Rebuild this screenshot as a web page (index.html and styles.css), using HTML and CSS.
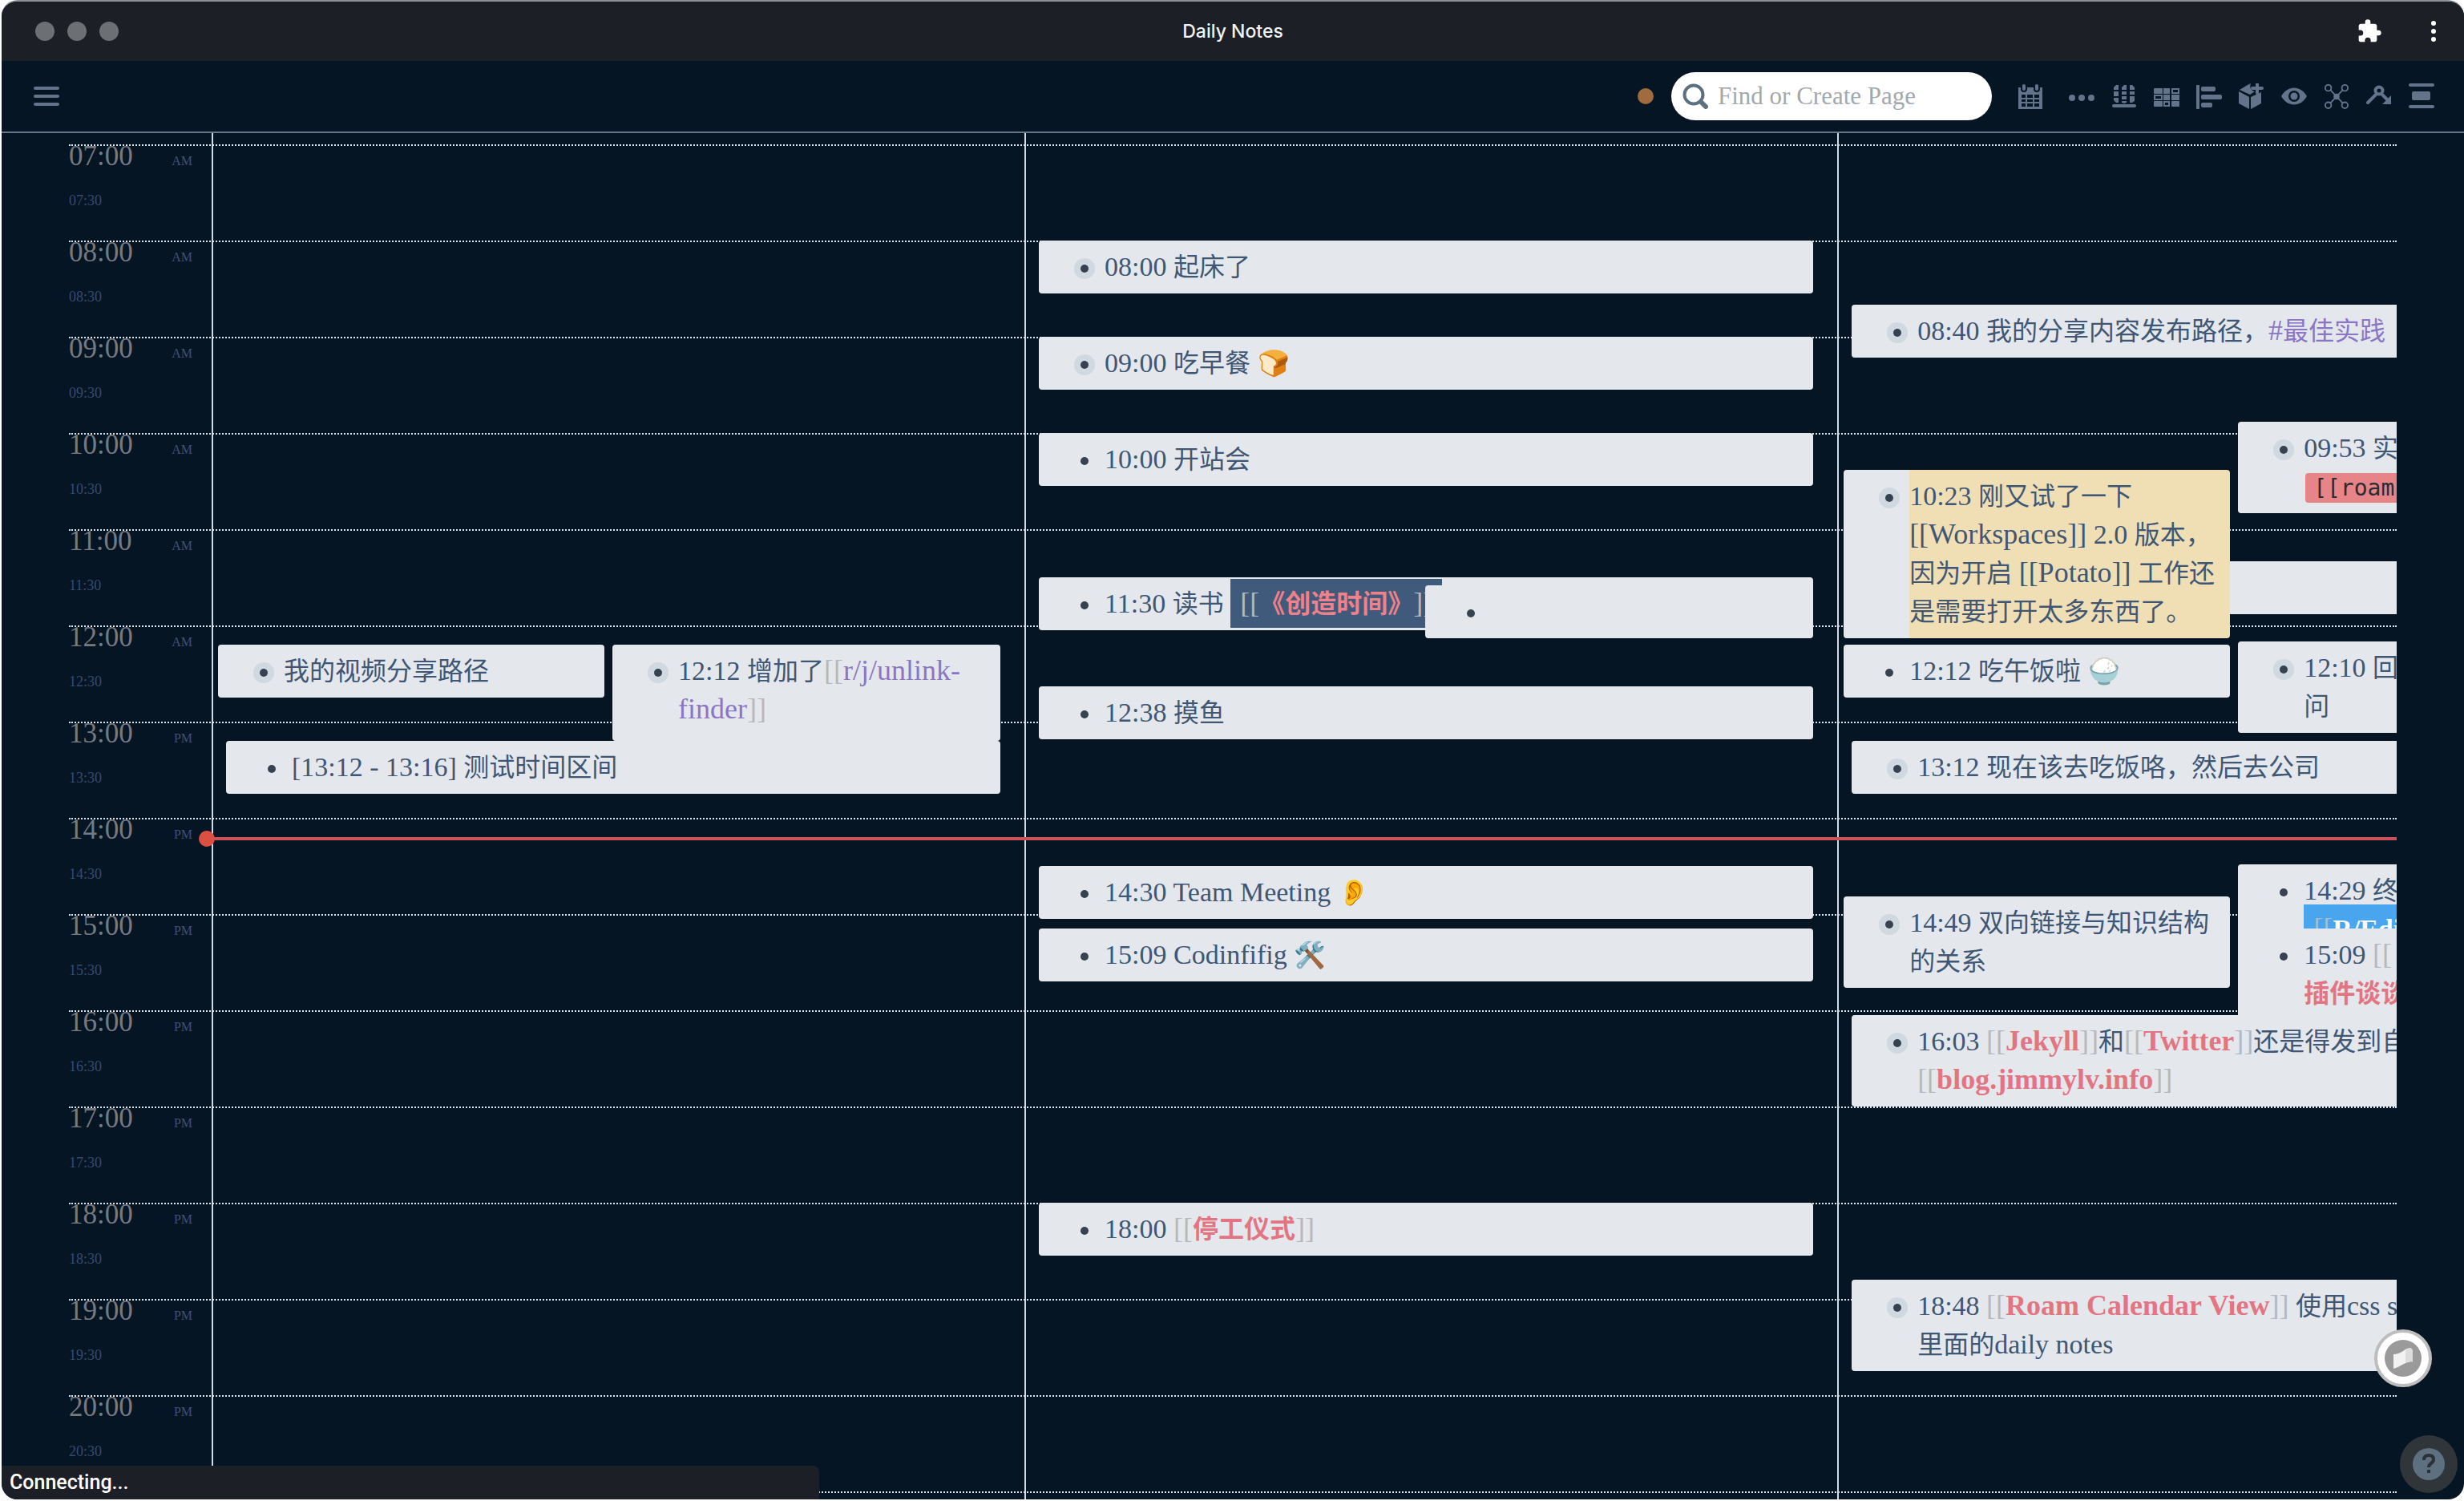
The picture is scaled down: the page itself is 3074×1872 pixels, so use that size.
FILE: index.html
```html
<!DOCTYPE html>
<html lang="en">
<head>
<meta charset="utf-8">
<title>Daily Notes</title>
<link rel="stylesheet" href="styles.css">
</head>
<body>
<div class="window">
  <header class="titlebar">
    <div class="lights"><span class="light"></span><span class="light"></span><span class="light"></span></div>
    <h1 class="title">Daily Notes</h1>
    <div class="title-actions">
      <button class="icon-btn" aria-label="Extensions"><svg viewBox="0 0 24 24" fill="#fff"><path d="M20.5 11H19V7c0-1.100-.9-2-2-2h-4V3.500a2.500 2.500 0 0 0-5 0V5H4c-1.100 0-2 .9-2 2v3.800h1.500a2.700 2.700 0 0 1 0 5.400H2V20c0 1.100.9 2 2 2h3.800v-1.500a2.700 2.700 0 0 1 5.400 0V22H17c1.100 0 2-.9 2-2v-4h1.500a2.500 2.500 0 0 0 0-5z"/></svg></button>
      <button class="icon-btn" aria-label="Menu"><svg viewBox="0 0 32 32" fill="#fff"><circle cx="16" cy="6" r="3"/><circle cx="16" cy="16" r="3"/><circle cx="16" cy="26" r="3"/></svg></button>
    </div>
  </header>

  <nav class="topbar">
    <button class="icon-btn" aria-label="Open sidebar"><svg viewBox="0 0 32 32"><path d="M2 6h28M2 16h28M2 26h28" stroke="currentColor" stroke-width="4" stroke-linecap="round"/></svg></button>
    <div class="tools">
      <span class="sync-dot"></span>
      <label class="search">
        <svg class="search-icon" viewBox="0 0 32 32" fill="none" stroke="#5c7080"><circle cx="14" cy="14" r="11.500" stroke-width="4"/><path d="M23 23l6 6" stroke-width="6" stroke-linecap="round"/></svg>
        <input class="search-input" type="text" placeholder="Find or Create Page" aria-label="Find or Create Page">
      </label>
      <button class="icon-btn" aria-label="Calendar"><svg viewBox="0 0 32 32"><path fill="currentColor" fill-rule="evenodd" d="M1 5h3v2a4 4 0 0 0 8 0V5h8v2a4 4 0 0 0 8 0V5h3v27H1zM5 14v4h5v-4zM12 14v4h7v-4zM21 14v4h6v-4zM5 20v3h5v-3zM12 20v3h7v-3zM21 20v3h6v-3zM5 25v4h5v-4zM12 25v4h7v-4zM21 25v4h6v-4z"/><rect x="6" y="1" width="4" height="8" rx="2" fill="currentColor"/><rect x="22" y="1" width="4" height="8" rx="2" fill="currentColor"/></svg></button>
      <div class="tool-row">
        <button class="icon-btn" aria-label="More"><svg viewBox="0 0 32 32" fill="currentColor"><circle cx="4" cy="18" r="4"/><circle cx="16" cy="18" r="4"/><circle cx="28" cy="18" r="4"/></svg></button>
        <button class="icon-btn" aria-label="Columns"><svg viewBox="0 0 32 32" fill="currentColor"><path d="M3 8V5l3-3h3v6zM3 10h6v6H3zM3 18h6v6H6l-3-3zM13 8V5l3-3h3v6zM13 10h6v4h-6zM13 16h6v4h-6zM13 22h6v2l-3 1-3-1zM23 2h3l3 3v3h-6zM23 10h6v4h-6zM23 16h6v6l-3 2h-3z"/><rect x="1" y="26" width="30" height="4" rx="2"/></svg></button>
        <button class="icon-btn" aria-label="Table"><svg viewBox="0 0 32 32" fill="currentColor"><rect y="6" width="11" height="7" rx="1"/><rect x="12" y="6" width="8" height="7"/><rect x="12" y="14" width="8" height="7"/><rect x="22" y="14" width="10" height="7"/><rect y="22" width="11" height="7" rx="1"/><rect x="22" y="22" width="10" height="7" rx="1"/><g fill="none" stroke="currentColor" stroke-width="2"><rect x="23" y="7" width="8" height="5"/><rect x="1" y="15" width="9" height="5"/><rect x="13" y="23" width="6" height="5"/></g></svg></button>
        <button class="icon-btn" aria-label="Align left"><svg viewBox="0 0 32 32" fill="currentColor"><rect y="2" width="4" height="30" rx="1"/><rect x="6" y="4" width="18" height="6" rx="2"/><rect x="6" y="14" width="26" height="6" rx="2"/><rect x="6" y="24" width="14" height="6" rx="2"/></svg></button>
        <button class="icon-btn" aria-label="New block"><svg viewBox="0 0 32 32" fill="currentColor"><path d="M0 10l13 7v15L0 25zM15 32V17l13-6v14zM1 8l10-6 4-2c-2 5 0 9 5 10l-6 4z"/><path d="M23 0v12M17 6h12" stroke="currentColor" stroke-width="4" stroke-linecap="round"/></svg></button>
        <button class="icon-btn" aria-label="View"><svg viewBox="0 0 32 32"><path fill="currentColor" fill-rule="evenodd" d="M0 16C8 2 24 2 32 16 24 30 8 30 0 16zM16 9a7 7 0 1 0 0 14 7 7 0 0 0 0-14z"/><circle cx="16" cy="16" r="4.500" fill="currentColor"/></svg></button>
        <button class="icon-btn" aria-label="Graph"><svg viewBox="0 0 32 34" fill="none" stroke="currentColor" stroke-width="2"><circle cx="5" cy="6" r="4"/><circle cx="27" cy="6" r="4"/><circle cx="5" cy="29" r="4"/><circle cx="27" cy="29" r="4"/><path d="M8 9l16 17M24 9L8 26"/><circle cx="16" cy="17.500" r="3" fill="currentColor"/></svg></button>
        <button class="icon-btn" aria-label="Path"><svg viewBox="0 0 32 32" fill="none" stroke="currentColor" stroke-width="4" stroke-linecap="round"><circle cx="16" cy="9" r="4.500"/><path d="M12 14L2 24M20 14l8 8"/><path d="M31 15v11H20z" fill="currentColor" stroke="none"/></svg></button>
        <button class="icon-btn" aria-label="Sidebar"><svg viewBox="0 0 32 32" fill="currentColor"><rect y="0" width="32" height="4" rx="2"/><rect x="4" y="10" width="23" height="11" rx="2"/><rect y="27" width="32" height="4" rx="2"/></svg></button>
      </div>
    </div>
  </nav>

  <main class="calendar">
    <ol class="hours">
      <li class="hour"><div class="hour-head"><time>07:00</time><small>AM</small></div><div class="half">07:30</div></li>
      <li class="hour"><div class="hour-head"><time>08:00</time><small>AM</small></div><div class="half">08:30</div></li>
      <li class="hour"><div class="hour-head"><time>09:00</time><small>AM</small></div><div class="half">09:30</div></li>
      <li class="hour"><div class="hour-head"><time>10:00</time><small>AM</small></div><div class="half">10:30</div></li>
      <li class="hour"><div class="hour-head"><time>11:00</time><small>AM</small></div><div class="half">11:30</div></li>
      <li class="hour"><div class="hour-head"><time>12:00</time><small>AM</small></div><div class="half">12:30</div></li>
      <li class="hour"><div class="hour-head"><time>13:00</time><small>PM</small></div><div class="half">13:30</div></li>
      <li class="hour"><div class="hour-head"><time>14:00</time><small>PM</small></div><div class="half">14:30</div></li>
      <li class="hour"><div class="hour-head"><time>15:00</time><small>PM</small></div><div class="half">15:30</div></li>
      <li class="hour"><div class="hour-head"><time>16:00</time><small>PM</small></div><div class="half">16:30</div></li>
      <li class="hour"><div class="hour-head"><time>17:00</time><small>PM</small></div><div class="half">17:30</div></li>
      <li class="hour"><div class="hour-head"><time>18:00</time><small>PM</small></div><div class="half">18:30</div></li>
      <li class="hour"><div class="hour-head"><time>19:00</time><small>PM</small></div><div class="half">19:30</div></li>
      <li class="hour"><div class="hour-head"><time>20:00</time><small>PM</small></div><div class="half">20:30</div></li>
      <li class="hour"></li>
    </ol>

    <!-- --at is the number of minutes after 07:00 -->
    <div class="days">
      <section class="day">
        <article class="event left parent" style="--at:312"><span class="zh">我的视频分享路径</span></article>
        <article class="event right parent tall" style="--at:312">12:12 <span class="zh">增加了</span><i class="br">[[</i><a class="tag" href="#">r/j/unlink-<br>finder</a><i class="br">]]</i></article>
        <article class="event" style="--at:372">[13:12 - 13:16] <span class="zh">测试时间区间</span></article>
      </section>

      <section class="day">
        <article class="event parent" style="--at:60">08:00 <span class="zh">起床了</span></article>
        <article class="event parent" style="--at:120">09:00 <span class="zh">吃早餐</span> <span class="emoji">🍞</span></article>
        <article class="event" style="--at:180">10:00 <span class="zh">开站会</span></article>
        <article class="event" style="--at:270">11:30 <span class="zh">读书</span> <span class="mark navy"><i class="br">[[</i><a class="ref zh" href="#">《创造时间》</a><i class="br">]]</i></span></article>
        <article class="event right" style="--at:275"></article>
        <article class="event" style="--at:338">12:38 <span class="zh">摸鱼</span></article>
        <article class="event" style="--at:450">14:30 Team Meeting <span class="emoji">👂</span></article>
        <article class="event" style="--at:489">15:09 Codinfifig <span class="emoji">🛠️</span></article>
        <article class="event" style="--at:660">18:00 <i class="br">[[</i><a class="ref zh" href="#">停工仪式</a><i class="br">]]</i></article>
      </section>

      <section class="day">
        <article class="event parent" style="--at:100">08:40 <span class="zh">我的分享内容发布路径，</span><a class="tag" href="#">#<span class="zh">最佳实践</span></a></article>
        <article class="event right parent" style="--at:173">09:53 <span class="zh">实</span><br><code class="code">[[roam</code></article>
        <article class="event" style="--at:260"></article>
        <article class="event left parent sand" style="--at:203">10:23 <span class="zh">刚又试了一下</span><br><span class="page">[[Workspaces]]</span> 2.0 <span class="zh">版本，</span><br><span class="zh">因为开启</span> <span class="page">[[Potato]]</span> <span class="zh">工作还</span><br><span class="zh">是需要打开太多东西了。</span></article>
        <article class="event left" style="--at:312">12:12 <span class="zh">吃午饭啦</span> <span class="emoji">🍚</span></article>
        <article class="event right parent" style="--at:310">12:10 <span class="zh">回</span><br><span class="zh">问</span></article>
        <article class="event parent" style="--at:372">13:12 <span class="zh">现在该去吃饭咯，然后去公司</span></article>
        <article class="event right" style="--at:449">14:29 <span class="zh">终</span><br><span class="mark blue"><i class="br">[[</i><b>R/Edi</b></span></article>
        <article class="event left parent" style="--at:469">14:49 <span class="zh">双向链接与知识结构</span><br><span class="zh">的关系</span></article>
        <article class="event right" style="--at:489">15:09 <i class="br">[[</i><br><a class="ref zh" href="#">插件谈谈</a></article>
        <article class="event parent" style="--at:543">16:03 <i class="br">[[</i><a class="ref" href="#">Jekyll</a><i class="br">]]</i><span class="zh">和</span><i class="br">[[</i><a class="ref" href="#">Twitter</a><i class="br">]]</i><span class="zh">还是得发到自</span><br><i class="br">[[</i><a class="ref" href="#">blog.jimmylv.info</a><i class="br">]]</i></article>
        <article class="event parent" style="--at:708">18:48 <i class="br">[[</i><a class="ref" href="#">Roam Calendar View</a><i class="br">]]</i> <span class="zh">使用</span>css s<br><span class="zh">里面的</span>daily notes</article>
      </section>
      <div class="now" style="--at:433"></div>
    </div>
  </main>

  <button class="fab note" aria-label="Notes"><svg viewBox="0 0 72 72"><circle cx="36" cy="36" r="34" fill="#fff" stroke="#bdbdbd" stroke-width="4"/><circle cx="36" cy="36" r="23" fill="#9a9a9a"/><path d="M24 31q6 0 12-4 5-4 10-4v17q-6 1-11 4-6 4-11 5z" fill="#f2f2f2"/><path d="M39 27q4-4 7-4l2 3v15l-2-1q-4 0-7 2z" fill="#dcdcdc"/></svg></button>
  <button class="fab help" aria-label="Help"><svg viewBox="0 0 72 72"><circle cx="36" cy="36" r="36" fill="#30353a"/><circle cx="36" cy="36" r="20" fill="#5c7080"/><path d="M30 31q0-6 6-6t6 5q0 3-3 5-3 2-3 5" fill="none" stroke="#2b3136" stroke-width="4"/><rect x="34" y="43" width="4" height="4" fill="#2b3136"/></svg></button>
  <div class="status">Connecting...</div>
</div>
</body>
</html>
```
FILE: styles.css
```css
* {
  box-sizing: border-box;
}

body {
  margin: 0;
  background: #fff;
  font-family: "Liberation Serif", "Noto Sans CJK SC", serif;
}

button {
  padding: 0;
  border: 0;
  background: none;
  color: inherit;
}

a {
  text-decoration: none;
}

.window {
  position: relative;
  display: flex;
  flex-direction: column;
  height: calc(100vh - 2px);
  margin-left: 2px;
  overflow: hidden;
  border-top: 2px solid #8b9099;
  border-radius: 20px;
  background: #061524;
}

/* title bar */
.titlebar {
  display: grid;
  grid-template-columns: 1fr auto 1fr;
  align-items: center;
  flex: none;
  height: 74px;
  padding: 0 22px;
  background: #1c1f26;
}

.lights {
  display: flex;
  gap: 16px;
  padding-left: 20px;
}

.light {
  width: 24px;
  height: 24px;
  border-radius: 50%;
  background: #6c6f73;
}

.title {
  margin: 0;
  font: 500 23px/32px Inter, sans-serif;
  color: #f1f2f3;
}

.title-actions {
  display: flex;
  justify-content: flex-end;
  gap: 48px;
}

.icon-btn {
  flex: none;
  width: 32px;
  height: 32px;
}

.icon-btn svg {
  display: block;
  width: 32px;
  height: 32px;
}

/* top bar */
.topbar {
  display: flex;
  align-items: center;
  justify-content: space-between;
  flex: none;
  height: 90px;
  padding: 0 37px 0 40px;
  border-bottom: 2px solid #66778a;
  color: #63748a;
}

.tools {
  display: flex;
  align-items: center;
  gap: 32px;
}

.tool-row {
  display: flex;
  gap: 21px;
}

.sync-dot {
  width: 20px;
  height: 20px;
  border-radius: 50%;
  background: #a06b3d;
}

.search {
  display: flex;
  align-items: center;
  gap: 12px;
  width: 400px;
  height: 60px;
  margin-left: -10px;
  padding: 0 14px;
  border-radius: 30px;
  background: #fff;
}

.search-icon {
  flex: none;
  width: 32px;
  height: 32px;
}

.search-input {
  flex: 1;
  min-width: 0;
  padding: 0;
  border: 0;
  outline: 0;
  background: none;
  font: 31px/40px "Liberation Serif", serif;
}

.search-input::placeholder {
  color: #a3a8ad;
}

/* calendar */
.calendar {
  display: grid;
  grid-template-columns: 178px 1fr;
  flex: 1;
  min-height: 0;
  margin: 0 84px;
  overflow: hidden;
}

.hours {
  grid-area: 1 / 1 / 2 / 3;
  margin: 0;
  padding: 14px 0 0;
  list-style: none;
}

.hour {
  height: 120px;
  border-top: 2px dotted #d9e4ee;
  color: #354b70;
}

.hour-head {
  display: flex;
  align-items: baseline;
  justify-content: space-between;
  width: 154px;
  height: 24px;
  font-size: 35px;
  line-height: 26px;
  color: #767a80;
}

.hour-head small {
  font-size: 16px;
  color: #3b5379;
}

.half {
  margin-top: 32px;
  font-size: 18px;
  line-height: 24px;
}

.days {
  grid-area: 1 / 2 / 2 / 3;
  position: relative;
  display: flex;
  min-width: 0;
}

.day {
  position: relative;
  flex: 0 0 37.2%;
  border-left: 2px solid #d3dbe6;
}

.event {
  position: absolute;
  top: calc(14px + var(--at) * 2px);
  left: 16px;
  right: 30px;
  min-height: 66px;
  padding: 9px 0 9px 82px;
  border-radius: 4px;
  background: #e4e8ec;
  font-size: 34px;
  line-height: 48px;
  white-space: nowrap;
  color: #3f5775;
}

.event.left {
  left: 6px;
  right: auto;
  width: calc(50% - 24px);
}

.event.right {
  left: calc(50% - 8px);
}

.event.tall {
  min-height: 120px;
}

.event.sand {
  background: linear-gradient(90deg, #e4e8ec 82px, #f0deb4 82px);
}

/* bullet, with a halo on blocks that have children */
.event::before {
  content: "";
  position: absolute;
  top: 30px;
  left: 52px;
  width: 10px;
  height: 10px;
  border-radius: 50%;
  background: #36424f;
}

.event.parent::before {
  box-shadow: 0 0 0 8px #d0d9e0;
}

.br,
.ref,
.tag,
.page {
  font-size: 36px;
  line-height: 1;
}

.zh,
.emoji {
  font-size: 32px;
  line-height: 1;
  text-spacing-trim: space-all;
}

.zh {
  font-family: "Noto Sans CJK SC", sans-serif;
}

.br {
  font-style: normal;
  font-weight: 400;
  color: #b1b9c2;
}

.ref {
  font-weight: 700;
  color: #e37582;
}

.tag {
  color: #8b76c6;
}

.mark {
  padding: 12px;
}

.navy {
  background: #3f5a7b;
}

.navy .ref {
  color: #f0808a;
}

.blue {
  padding-right: 60px;
  background: #48a5ee;
  color: #fff;
}

.code {
  padding: 2px 60px 2px 10px;
  margin-left: 2px;
  border-radius: 4px;
  background: #e68488;
  font: 28px/32px "DejaVu Sans Mono", monospace;
  color: #2d2b33;
}

.now {
  position: absolute;
  top: calc(12px + var(--at) * 2px);
  left: 0;
  right: 0;
  height: 4px;
  background: #cc5257;
}

.now::before {
  content: "";
  position: absolute;
  top: -8px;
  left: -16px;
  width: 20px;
  height: 20px;
  border-radius: 50%;
  background: #dc5044;
}

/* floating items */
.fab {
  position: absolute;
  width: 72px;
  height: 72px;
}

.fab svg {
  display: block;
  width: 72px;
  height: 72px;
}

.note {
  right: 40px;
  bottom: 140px;
}

.help {
  right: 8px;
  bottom: 8px;
}

.status {
  position: absolute;
  left: 0;
  bottom: 0;
  width: 1020px;
  height: 42px;
  padding: 0 10px;
  border-top-right-radius: 8px;
  background: #1c1f26;
  font: 500 25px/42px Roboto, sans-serif;
  color: #fff;
}
```
